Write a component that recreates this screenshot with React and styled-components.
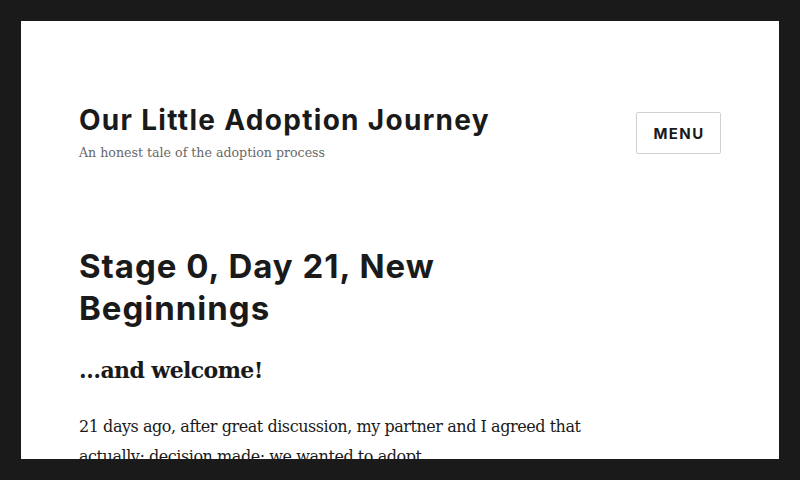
import React from 'react';
import styled, { createGlobalStyle } from 'styled-components';

const Global = createGlobalStyle`
  html, body { margin: 0; padding: 0; background: #1a1a1a; }
  body { overflow: hidden; }
`;

const Frame = styled.div`
  padding: 21px 21px 0;
`;

const Page = styled.div`
  background: #fff;
  min-height: 700px;
  padding: 82px 58px 0;
  color: #1a1a1a;
`;

const Header = styled.header`
  display: flex;
  justify-content: space-between;
  align-items: center;
`;

const Branding = styled.div`
  display: flex;
  flex-direction: column;
`;

const SiteTitle = styled.h1`
  margin: 0;
  font-family: Inter, "DejaVu Sans", sans-serif;
  font-weight: 700;
  font-size: 28px;
  line-height: 35px;
  letter-spacing: 1.3px;
  color: #1a1a1a;
`;

const Tagline = styled.p`
  margin: 4px 0 0;
  font-family: "DejaVu Serif", "Liberation Serif", serif;
  font-size: 12.6px;
  line-height: 21px;
  color: #686868;
`;

const MenuButton = styled.button`
  box-sizing: border-box;
  width: 85px;
  height: 42px;
  background: #fff;
  border: 1px solid #d1d1d1;
  border-radius: 2px;
  font-family: Inter, "DejaVu Sans", sans-serif;
  font-weight: 700;
  font-size: 15px;
  letter-spacing: 1.4px;
  text-transform: uppercase;
  color: #1a1a1a;
  padding: 0 0 0 1px;
`;

const Article = styled.article`
  margin-top: 82px;
`;

const EntryTitle = styled.h2`
  margin: 0;
  font-family: Inter, "DejaVu Sans", sans-serif;
  font-weight: 700;
  font-size: 33px;
  line-height: 42px;
  letter-spacing: 1px;
  max-width: 440px;
`;

const SubHeading = styled.h3`
  margin: 27px 0 0;
  font-family: "DejaVu Serif", "Liberation Serif", serif;
  font-weight: 700;
  font-size: 22px;
  line-height: 28px;
  letter-spacing: -0.6px;
`;

const Paragraph = styled.p`
  margin: 28px 0 0;
  font-family: "DejaVu Serif", "Liberation Serif", serif;
  font-size: 16px;
  line-height: 29.75px;
  letter-spacing: -0.45px;
  max-width: 540px;
`;

const BottomBar = styled.div`
  position: fixed;
  left: 0;
  right: 0;
  bottom: 0;
  height: 21px;
  background: #1a1a1a;
`;

export default function App() {
  return (
    <>
      <Global />
      <Frame>
        <Page>
          <Header>
            <Branding>
              <SiteTitle>Our Little Adoption Journey</SiteTitle>
              <Tagline>An honest tale of the adoption process</Tagline>
            </Branding>
            <MenuButton>Menu</MenuButton>
          </Header>
          <Article>
            <EntryTitle>Stage 0, Day 21, New Beginnings</EntryTitle>
            <SubHeading>…and welcome!</SubHeading>
            <Paragraph>
              21 days ago, after great discussion, my partner and I agreed that
              actually; decision made; we wanted to adopt.
            </Paragraph>
          </Article>
        </Page>
      </Frame>
      <BottomBar />
    </>
  );
}
